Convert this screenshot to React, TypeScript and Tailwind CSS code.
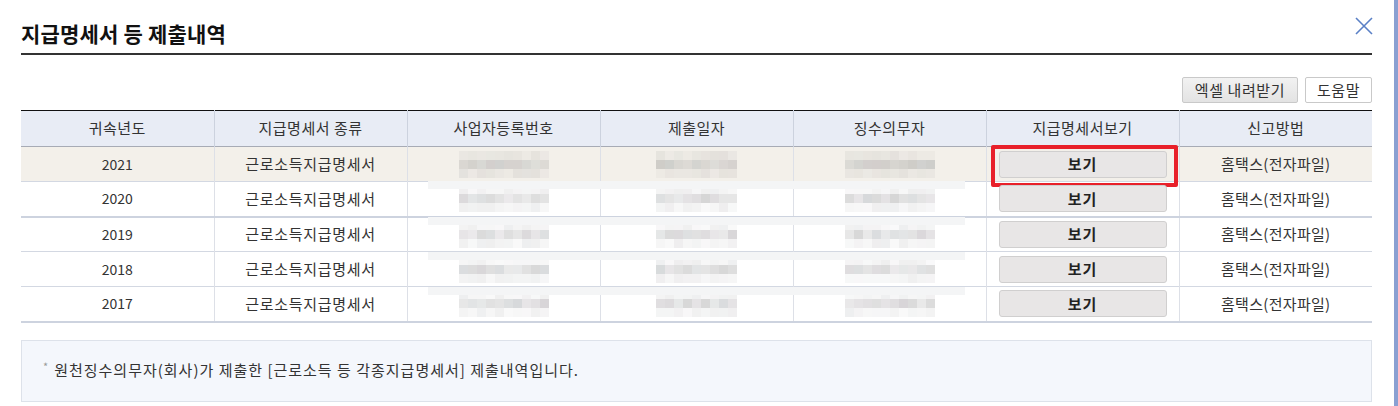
import React from 'react'

const font = { fontFamily: '"Noto Sans CJK KR", "Noto Sans", sans-serif' }

const rows = [
  { year: '2021', seed: 3 },
  { year: '2020', seed: 11 },
  { year: '2019', seed: 19 },
  { year: '2018', seed: 27 },
  { year: '2017', seed: 35 },
]

const headers = ['귀속년도', '지급명세서 종류', '사업자등록번호', '제출일자', '징수의무자', '지급명세서보기', '신고방법']

// mosaic block used where the original is pixelated out
function Mosaic({ cols, seed }: { cols: number; seed: number }) {
  let s = seed * 9301 + 49297
  const rand = () => {
    s = (s * 9301 + 49297) % 233280
    return s / 233280
  }
  const lines = [0, 1, 2].map((r) =>
    Array.from({ length: cols }, () => {
      const v = r === 1 ? 0.14 + rand() * 0.13 : 0.04 + rand() * 0.07
      const tint = rand()
      const c = tint < 0.3 ? '110,100,110' : tint < 0.6 ? '100,110,115' : '105,105,105'
      return `rgba(${c},${v.toFixed(2)})`
    }),
  )
  return (
    <div className="flex flex-col">
      {lines.map((line, i) => (
        <div key={i} className="flex">
          {line.map((bg, j) => (
            <div key={j} className="w-[9px] h-[9px]" style={{ background: bg }} />
          ))}
        </div>
      ))}
    </div>
  )
}

export default function App() {
  return (
    <div className="w-[1398px] h-[406px] bg-white flex overflow-hidden text-[#333]" style={font}>
      <div className="flex-1 pl-[21px] pr-[22px]">
        <div className="h-[55px] flex justify-between border-b-2 border-[#333]">
          <h2 className="pt-[19px] text-[21px] leading-[28px] font-bold text-[#111] tracking-[0.2px]">
            지급명세서 등 제출내역
          </h2>
          <button className="mt-[17px] mr-[-1px] w-[18px] h-[18px]">
            <svg viewBox="0 0 18 18" className="w-[18px] h-[18px]">
              <path d="M1 1 L17 17 M17 1 L1 17" stroke="#5a80c6" strokeWidth="1.6" />
            </svg>
          </button>
        </div>

        <div className="flex justify-end gap-[7px] mt-[22px]">
          <button className="h-[26px] w-[116px] border border-[#c9c9c9] rounded-[2px] bg-gradient-to-b from-[#f2f2f2] to-[#e3e3e3] text-[15px] tracking-[0.6px] text-[#333]">
            엑셀 내려받기
          </button>
          <button className="h-[26px] w-[67px] border border-[#c9c9c9] rounded-[2px] bg-white text-[15px] tracking-[0.6px] text-[#333]">
            도움말
          </button>
        </div>

        <div className="relative mt-[7px]">
          <table className="w-full table-fixed border-collapse text-[15px] tracking-[0.5px]">
            <thead>
              <tr className="h-[36px] bg-[#e8ecf5] border-t border-[#111] border-b border-b-[#a7abb5]">
                {headers.map((h, i) => (
                  <th
                    key={h}
                    className={`font-normal text-[#333] ${i > 0 ? 'border-l border-[#ccd2de]' : ''}`}
                  >
                    {h}
                  </th>
                ))}
              </tr>
            </thead>
            <tbody>
              {rows.map((r, idx) => (
                <tr
                  key={r.year}
                  className={`h-[35px] ${idx === 0 ? 'bg-[#f3f0ea]' : 'bg-white'} ${
                    idx === 1 || idx === 4 ? 'border-b-2 border-[#cdd3df]' : 'border-b border-[#d3d8e2]'
                  }`}
                >
                  <td className="text-center text-[14px] tracking-normal">{r.year}</td>
                  <td className="text-center border-l border-[#dde0e7] tracking-[0.7px]">근로소득지급명세서</td>
                  <td className="border-l border-[#dde0e7]">
                    <div className="flex justify-center">
                      <Mosaic cols={10} seed={r.seed} />
                    </div>
                  </td>
                  <td className="border-l border-[#dde0e7]">
                    <div className="flex justify-center">
                      <Mosaic cols={9} seed={r.seed + 3} />
                    </div>
                  </td>
                  <td className="border-l border-[#dde0e7]">
                    <div className="flex justify-center">
                      <Mosaic cols={10} seed={r.seed + 5} />
                    </div>
                  </td>
                  <td className="relative border-l border-[#dde0e7] px-[12px]">
                    <button className="w-full h-[27px] border border-[#d0cfcf] rounded-[3px] bg-[#e8e6e6] font-bold text-[#222] tracking-[1px]">
                      보기
                    </button>
                    {idx === 0 && (
                      <div className="absolute left-[4px] right-[1px] top-[-2px] bottom-[-6px] border-[4px] border-[#e8202a] rounded-[2px]" />
                    )}
                  </td>
                  <td className="text-center border-l border-[#dde0e7] tracking-[0.3px]">홈택스(전자파일)</td>
                </tr>
              ))}
            </tbody>
          </table>
          {/* white bands left by the redaction */}
          {[71, 107, 142, 177].map((t) => (
            <div key={t} className="absolute left-[407px] w-[537px] h-[8px] bg-[#f4f5f6]" style={{ top: t }} />
          ))}
        </div>

        <div className="mt-[17px] h-[62px] bg-[#f4f7fc] border border-[#dde2ea] flex items-center pl-[21px] text-[15px] tracking-[1px] text-[#333]">
          <span className="text-[11px] text-[#999] mr-[5px] -mt-[8px]">*</span>
          원천징수의무자(회사)가 제출한 [근로소득 등 각종지급명세서] 제출내역입니다.
        </div>
      </div>
      <div className="w-[4px] h-full bg-[#8aa0d2]" />
    </div>
  )
}
